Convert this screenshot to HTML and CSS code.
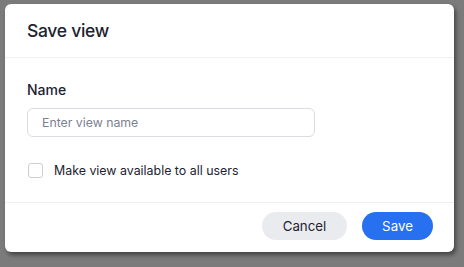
FILE: index.html
```html
<!DOCTYPE html>
<html>
<head>
    <title>Save view</title>
    <link rel="stylesheet" href="styles.css">
</head>
<body>

<div class="modal">
    <div class="modal-header">
        <h2>Save view</h2>
    </div>
    <div class="modal-body">
        <label class="field-label" for="viewName">Name</label>
        <input id="viewName" class="text-input" type="text" placeholder="Enter view name">
        <label class="check-row">
            <span class="checkbox"></span>
            <span>Make view available to all users</span>
        </label>
    </div>
    <div class="modal-footer">
        <button class="btn btn-secondary">Cancel</button>
        <button class="btn btn-primary">Save</button>
    </div>
</div>

</body>
</html>
```

FILE: styles.css
```css
body {
    margin: 0;
    padding: 4px 10px 15px 5px;
    background-color: #7b7b7b;
    font-family: 'Inter', 'Liberation Sans', sans-serif;
    color: #1d232f;
}
.modal {
    width: 449px;
    height: 248px;
    background-color: #fff;
    border-radius: 6px;
    box-shadow: 2px 3px 4px rgba(0, 0, 0, 0.45);
    display: flex;
    flex-direction: column;
    box-sizing: border-box;
}
.modal-header {
    height: 53px;
    padding: 0 22px;
    display: flex;
    align-items: center;
    border-bottom: 1px solid #eef0f3;
}
h2 {
    margin: 0;
    font-size: 17.5px;
    font-weight: 500;
    letter-spacing: -0.3px;
}
.modal-body {
    padding: 22px 22px 0 22px;
    height: 145px;
    box-sizing: border-box;
    border-bottom: 1px solid #eef0f3;
}
.field-label {
    display: block;
    font-size: 14px;
    font-weight: 500;
    line-height: 20px;
}
.text-input {
    display: block;
    margin-top: 8px;
    width: 288px;
    height: 29px;
    box-sizing: border-box;
    border: 1px solid #d9dce3;
    border-radius: 6px;
    padding: 0 14px;
    font-family: inherit;
    font-size: 12.3px;
}
.text-input::placeholder {
    color: #7c8290;
}
.check-row {
    display: flex;
    align-items: center;
    gap: 11px;
    margin-top: 26px;
    padding-left: 1px;
    font-size: 12.4px;
}
.checkbox {
    width: 15px;
    height: 15px;
    box-sizing: border-box;
    border: 1px solid #cbced5;
    border-radius: 3px;
}
.modal-footer {
    flex: 1;
    display: flex;
    justify-content: flex-end;
    align-items: center;
    gap: 15px;
    padding: 0 21px 4px 0;
}
.btn {
    height: 28px;
    border: none;
    border-radius: 14px;
    font-family: inherit;
    font-size: 13.3px;
}
.btn-secondary {
    width: 85px;
    background-color: #eaebef;
    color: #1d232f;
}
.btn-primary {
    width: 71px;
    background-color: #2770ef;
    color: #fff;
}
```
